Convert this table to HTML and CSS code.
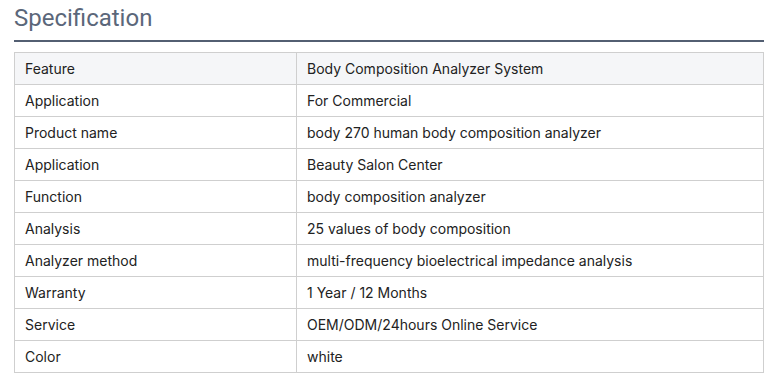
FILE: index.html
```html
<!DOCTYPE html>
<html>
<head>
<meta charset="utf-8">
<link rel="stylesheet" href="styles.css">
</head>
<body>
<section class="spec">
  <h2 class="spec-title">Specification</h2>
  <table class="spec-table">
    <tr class="head"><td>Feature</td><td>Body Composition Analyzer System</td></tr>
    <tr><td>Application</td><td>For Commercial</td></tr>
    <tr><td>Product name</td><td>body 270 human body composition analyzer</td></tr>
    <tr><td>Application</td><td>Beauty Salon Center</td></tr>
    <tr><td>Function</td><td>body composition analyzer</td></tr>
    <tr><td>Analysis</td><td>25 values of body composition</td></tr>
    <tr><td>Analyzer method</td><td>multi-frequency bioelectrical impedance analysis</td></tr>
    <tr><td>Warranty</td><td>1 Year / 12 Months</td></tr>
    <tr><td>Service</td><td>OEM/ODM/24hours Online Service</td></tr>
    <tr><td>Color</td><td>white</td></tr>
  </table>
</section>
</body>
</html>
```
FILE: styles.css
```css
html, body {
  margin: 0;
  padding: 0;
  background: #fff;
}
.spec {
  padding: 0 18px 0 14px;
}
.spec-title {
  margin: 0;
  font-family: Roboto, "Liberation Sans", sans-serif;
  font-weight: 400;
  font-size: 24px;
  line-height: 28px;
  padding-top: 4px;
  padding-bottom: 8px;
  color: #5b677a;
  border-bottom: 2px solid #535f72;
}
.spec-table {
  margin-top: 10px;
  width: 100%;
  border-collapse: collapse;
  font-family: Inter, "Noto Sans", sans-serif;
  font-size: 14px;
  color: #222;
}
.spec-table td {
  border: 1px solid #cfcfcf;
  height: 32px;
  padding: 0 10px;
  box-sizing: border-box;
  vertical-align: middle;
}
.spec-table td:first-child {
  width: 282px;
}
.spec-table tr.head td {
  background: #f5f6f8;
}
```
